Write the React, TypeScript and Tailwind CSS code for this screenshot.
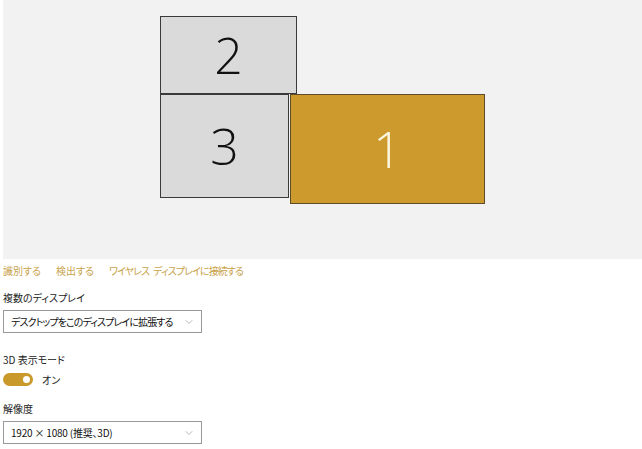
import { ChevronDown } from "lucide-react";

const jp = { fontFamily: '"Noto Sans CJK JP", "Noto Sans", sans-serif' };

function Monitor({ n, cls, primary }: { n: string; cls: string; primary?: boolean }) {
  return (
    <div
      className={`absolute flex items-center justify-center border-[1.5px] ${
        primary ? "bg-[#cc9a2d] border-[#5e4b28] text-[#fdf6e0]" : "bg-[#dadada] border-[#3a3a3a] text-[#111]"
      } ${cls}`}
    >
      <span className="text-[50px] font-light leading-none" style={{ fontFamily: '"Open Sans", "Noto Sans", sans-serif' }}>
        {n}
      </span>
    </div>
  );
}

function Select({ label, tight }: { label: string; tight?: boolean }) {
  return (
    <div className="flex h-[23px] w-[199px] items-center whitespace-nowrap border border-[#999] bg-white pl-[7px] pr-[6px] text-[10px] text-[#111]">
      <span className={tight ? "tracking-[-0.9px]" : "tracking-[-0.2px]"}>{label}</span>
      <ChevronDown size={12} strokeWidth={1.2} className="ml-auto shrink-0 text-[#888]" />
    </div>
  );
}

export default function App() {
  return (
    <div className="h-[449px] w-[642px] overflow-hidden bg-white [font-feature-settings:'palt']" style={jp}>
      <div className="relative ml-[3px] h-[259px] bg-[#f2f2f2]">
        <Monitor n="2" cls="left-[157px] top-[16px] h-[78px] w-[137px]" />
        <Monitor n="3" cls="left-[157px] top-[94px] h-[104px] w-[129px]" />
        <Monitor n="1" primary cls="left-[287px] top-[94px] h-[110px] w-[195px]" />
      </div>
      <div className="px-[3px] text-[10px]">
        <div className="mt-[4px] flex gap-[15px] text-[#c9a24a]">
          <span>識別する</span>
          <span>検出する</span>
          <span className="tracking-[-0.9px]">
            ワイヤレス<span className="ml-[4px]">ディスプレイに接続する</span>
          </span>
        </div>
        <div className="mt-[12px] text-[#222]">複数のディスプレイ</div>
        <div className="mt-[5px]">
          <Select tight label="デスクトップをこのディスプレイに拡張する" />
        </div>
        <div className="mt-[19px] text-[#222]">3D 表示モード</div>
        <div className="mt-[5px] flex items-center gap-[9px]">
          <div className="flex h-[13px] w-[30px] items-center justify-end rounded-full bg-[#c9992b] pr-[3px]">
            <div className="h-[7px] w-[7px] rounded-full bg-white" />
          </div>
          <span className="text-[#222]">オン</span>
        </div>
        <div className="mt-[14px] text-[#222]">解像度</div>
        <div className="mt-[5px]">
          <Select label="1920 × 1080 (推奨、3D)" />
        </div>
      </div>
    </div>
  );
}
